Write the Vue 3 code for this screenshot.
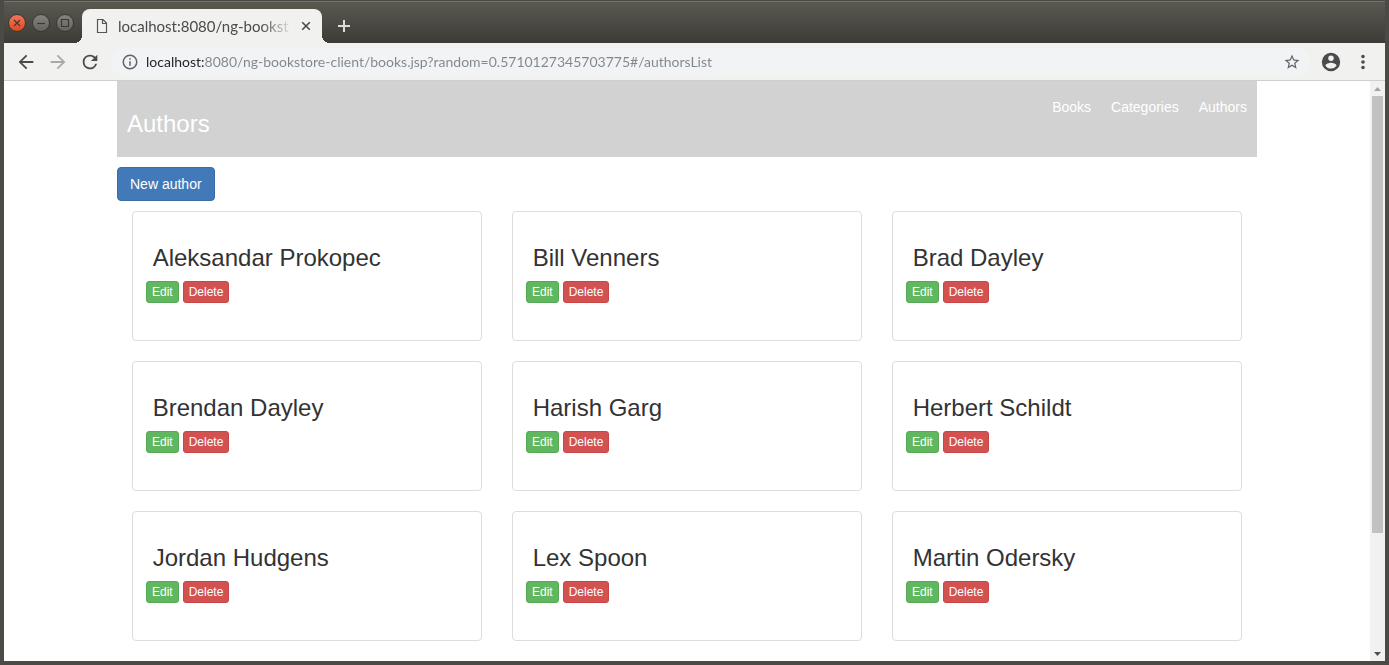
<script setup>
import { ref } from 'vue'

const address = ref('localhost:8080/ng-bookstore-client/books.jsp?random=0.5710127345703775#/authorsList')
const links = ['Books', 'Categories', 'Authors']
const authors = [
  'Aleksandar Prokopec', 'Bill Venners', 'Brad Dayley',
  'Brendan Dayley', 'Harish Garg', 'Herbert Schildt',
  'Jordan Hudgens', 'Lex Spoon', 'Martin Odersky',
]
</script>

<template>
  <div class="window">
    <header class="titlebar">
      <div class="controls">
        <button class="control close" type="button" aria-label="Close window">
          <svg viewBox="0 0 16 16"><path d="M5 5l6 6M11 5l-6 6" /></svg>
        </button>
        <button class="control" type="button" aria-label="Minimize window">
          <svg viewBox="0 0 16 16"><path d="M4 8.500h8" /></svg>
        </button>
        <button class="control" type="button" aria-label="Maximize window">
          <svg viewBox="0 0 16 16"><path d="M4.500 4.500h7v7h-7z" /></svg>
        </button>
      </div>
      <div class="tab">
        <svg class="page-icon" viewBox="0 0 12 16" aria-hidden="true"><path d="M1.500 1.500h5.500l3.500 3.500v9.500h-9zM6.500 1.500v4h4" /></svg>
        <span class="tab-title">localhost:8080/ng-bookst</span>
        <button class="tab-close" type="button" aria-label="Close tab">
          <svg viewBox="0 0 10 10"><path d="M1.200 1.200l7.600 7.600M8.800 1.200l-7.600 7.600" /></svg>
        </button>
      </div>
      <button class="new-tab" type="button" aria-label="New tab">
        <svg viewBox="0 0 12 12"><path d="M6 0v12M0 6h12" /></svg>
      </button>
    </header>

    <div class="toolbar">
      <button class="tool" type="button" aria-label="Back">
        <svg viewBox="0 0 24 24"><path d="M20 11H7.830l5.590-5.590L12 4l-8 8 8 8 1.410-1.410L7.830 13H20v-2z" /></svg>
      </button>
      <button class="tool faded" type="button" aria-label="Forward">
        <svg viewBox="0 0 24 24"><path d="M12 4l-1.410 1.410L16.170 11H4v2h12.170l-5.580 5.590L12 20l8-8z" /></svg>
      </button>
      <button class="tool" type="button" aria-label="Reload">
        <svg viewBox="0 0 24 24"><path d="M17.650 6.350A7.960 7.960 0 0 0 12 4a8 8 0 1 0 7.730 10h-2.080A6 6 0 1 1 12 6c1.660 0 3.140.69 4.220 1.780L13 11h7V4l-2.350 2.350z" /></svg>
      </button>
      <div class="omnibox">
        <svg class="info" viewBox="0 0 24 24" aria-hidden="true"><path d="M11 17h2v-6h-2v6zm1-15a10 10 0 1 0 0 20 10 10 0 0 0 0-20zm0 18a8 8 0 1 1 0-16 8 8 0 0 1 0 16zM11 9h2V7h-2v2z" /></svg>
        <input v-model="address" class="address" type="text" aria-label="Address" spellcheck="false">
        <button class="star" type="button" aria-label="Bookmark this page">
          <svg viewBox="0 0 24 24"><path d="M22 9.240l-7.190-.62L12 2 9.190 8.630 2 9.240l5.460 4.730L5.820 21 12 17.270 18.180 21l-1.630-7.030L22 9.240zM12 15.400l-3.760 2.270 1-4.280-3.320-2.880 4.380-.38L12 6.100l1.710 4.040 4.380.38-3.320 2.880 1 4.280L12 15.400z" /></svg>
        </button>
      </div>
      <button class="tool" type="button" aria-label="Profile">
        <svg viewBox="0 0 24 24"><path d="M12 2a10 10 0 1 0 0 20 10 10 0 0 0 0-20zm0 3a3 3 0 1 1 0 6 3 3 0 0 1 0-6zm0 14.200a7.200 7.200 0 0 1-6-3.220c.03-1.990 4-3.080 6-3.080 1.990 0 5.970 1.090 6 3.080a7.200 7.200 0 0 1-6 3.220z" /></svg>
      </button>
      <button class="tool" type="button" aria-label="Menu">
        <svg viewBox="0 0 24 24"><path d="M12 8a2 2 0 1 0 0-4 2 2 0 0 0 0 4zm0 2a2 2 0 1 0 0 4 2 2 0 0 0 0-4zm0 6a2 2 0 1 0 0 4 2 2 0 0 0 0-4z" /></svg>
      </button>
    </div>

    <div class="viewport">
      <div class="page">
        <div class="container">
          <header class="banner">
            <h1>Authors</h1>
            <nav>
              <a v-for="link in links" :key="link" href="#">{{ link }}</a>
            </nav>
          </header>
          <button class="btn primary" type="button">New author</button>
          <main class="grid">
            <article v-for="name in authors" :key="name" class="card">
              <h2>&nbsp;{{ name }}</h2>
              <div class="actions">
                <button class="btn small success" type="button">Edit</button>
                <button class="btn small danger" type="button">Delete</button>
              </div>
            </article>
          </main>
        </div>
      </div>
      <div class="scrollbar" aria-hidden="true">
        <svg class="arrow up" viewBox="0 0 15 15"><path d="M4 10h7l-3.500-4z" /></svg>
        <div class="track"><div class="thumb"></div></div>
        <svg class="arrow" viewBox="0 0 15 15"><path d="M4 6h7l-3.500 4z" /></svg>
      </div>
    </div>
  </div>
</template>

<style>
body {
  background: #4b4a44;
}
</style>

<style scoped>
* {
  box-sizing: border-box;
}

button {
  padding: 0;
  border: 0;
  background: none;
  font: inherit;
}

svg {
  display: block;
}

.window {
  display: flex;
  flex-direction: column;
  height: 100vh;
  overflow: hidden;
  border: solid #4b4a44;
  border-width: 0 4px 4px;
  font-family: "Liberation Sans", Arial, sans-serif;
}

.titlebar {
  display: flex;
  flex: none;
  align-items: flex-end;
  height: 43px;
  padding-left: 4px;
  border-top: 1px solid #4a4944;
  background: linear-gradient(#5b5a51, #3d3b37);
  box-shadow: inset 0 1px #73726b;
}

.controls {
  display: flex;
  gap: 6px;
  margin-right: 8px;
  padding-bottom: 11px;
}

.control {
  width: 18px;
  height: 18px;
  border: 1px solid #393833;
  border-radius: 50%;
  background: linear-gradient(#85837b, #65635c);
}

.control svg {
  width: 16px;
  height: 16px;
  fill: none;
  stroke: #3b3a36;
  stroke-width: 1.200;
}

.control.close {
  background: linear-gradient(#f2765a, #dd4a21);
}

.tab {
  position: relative;
  display: flex;
  align-items: center;
  width: 240px;
  height: 34px;
  padding: 0 11px 0 14px;
  border-radius: 8px 8px 0 0;
  background: #f1f1ef;
}

.tab::before,
.tab::after {
  content: "";
  position: absolute;
  bottom: 0;
  width: 8px;
  height: 8px;
}

.tab::before {
  right: 100%;
  background: radial-gradient(circle at 0 0, transparent 8px, #f1f1ef 8px);
}

.tab::after {
  left: 100%;
  background: radial-gradient(circle at 100% 0, transparent 8px, #f1f1ef 8px);
}

.page-icon {
  flex: none;
  width: 12px;
  height: 16px;
  margin-right: 10px;
  fill: none;
  stroke: #55565a;
  stroke-width: 1.200;
}

.tab-title {
  flex: 1;
  color: #4a4b4d;
  font: 15px/20px Lato, sans-serif;
  white-space: nowrap;
  mask-image: linear-gradient(90deg, #000 calc(100% - 32px), transparent);
}

.tab-close {
  margin-left: 8px;
}

.tab-close svg {
  width: 10px;
  height: 10px;
  stroke: #4a4b4d;
  stroke-width: 1.600;
}

.new-tab {
  margin: 0 0 11px 16px;
}

.new-tab svg {
  width: 12px;
  height: 12px;
  stroke: #dfdbd2;
  stroke-width: 2;
}

.toolbar {
  display: flex;
  flex: none;
  align-items: center;
  gap: 10px;
  height: 38px;
  padding: 0 11px;
  border-bottom: 1px solid #cfcfcd;
  background: #f1f1ef;
}

.tool {
  flex: none;
}

.tool svg {
  width: 22px;
  height: 22px;
  fill: #4b4b4d;
}

.tool.faded svg {
  fill: #a9a9a9;
}

.omnibox {
  display: flex;
  flex: 1;
  align-items: center;
  height: 28px;
  padding: 0 9px 0 10px;
  border-radius: 14px;
  background: #f1f3f4;
}

.info {
  flex: none;
  width: 18px;
  height: 18px;
  margin-right: 7px;
  fill: #5f6368;
}

.address {
  flex: 1;
  min-width: 0;
  padding: 0;
  border: 0;
  outline: 0;
  background: linear-gradient(90deg, #202124 58px, #80868b 58px) text;
  color: transparent;
  font: 14px/20px Lato, sans-serif;
}

.star svg {
  width: 18px;
  height: 18px;
  fill: #5f6368;
}

.viewport {
  display: flex;
  flex: 1;
  min-height: 0;
  background: #fff;
}

.page {
  flex: 1;
  overflow: hidden;
}

.container {
  max-width: 1170px;
  margin: 0 auto;
  padding: 0 15px;
}

.banner {
  display: flex;
  justify-content: space-between;
  margin-bottom: 10px;
  padding: 10px;
  background: #d2d2d2;
}

h1,
h2 {
  margin: 20px 0 10px;
  font-size: 24px;
  font-weight: 500;
  line-height: 26px;
}

h1 {
  color: #fff;
}

nav {
  display: flex;
  gap: 20px;
  padding-top: 6px;
}

nav a {
  color: #fff;
  font-size: 14px;
  line-height: 20px;
  text-decoration: none;
}

.btn {
  padding: 6px 12px;
  border: 1px solid;
  border-radius: 4px;
  color: #fff;
  font-size: 14px;
  line-height: 20px;
}

.primary {
  display: block;
  margin-bottom: 10px;
  border-color: #3a6ca5;
  background: #4279b8;
}

.small {
  padding: 1px 5px;
  border-radius: 3px;
  font-size: 12px;
  line-height: 18px;
}

.success {
  border-color: #55a955;
  background: #60b760;
}

.danger {
  border-color: #c94442;
  background: #d25252;
}

.grid {
  display: grid;
  grid-template-columns: repeat(3, 1fr);
  gap: 20px 30px;
  padding: 0 15px 20px;
}

.card {
  min-height: 130px;
  padding: 13px;
  border: 1px solid #ddd;
  border-radius: 4px;
}

h2 {
  color: #333;
}

.actions {
  display: flex;
  gap: 4px;
}

.scrollbar {
  display: flex;
  flex: none;
  flex-direction: column;
  width: 15px;
  background: #f1f1f1;
}

.arrow {
  width: 15px;
  height: 15px;
  fill: #505050;
}

.arrow.up {
  fill: #a3a3a3;
}

.track {
  flex: 1;
  padding: 0 2px;
}

.thumb {
  height: 79.500%;
  background: #c1c1c1;
}
</style>
